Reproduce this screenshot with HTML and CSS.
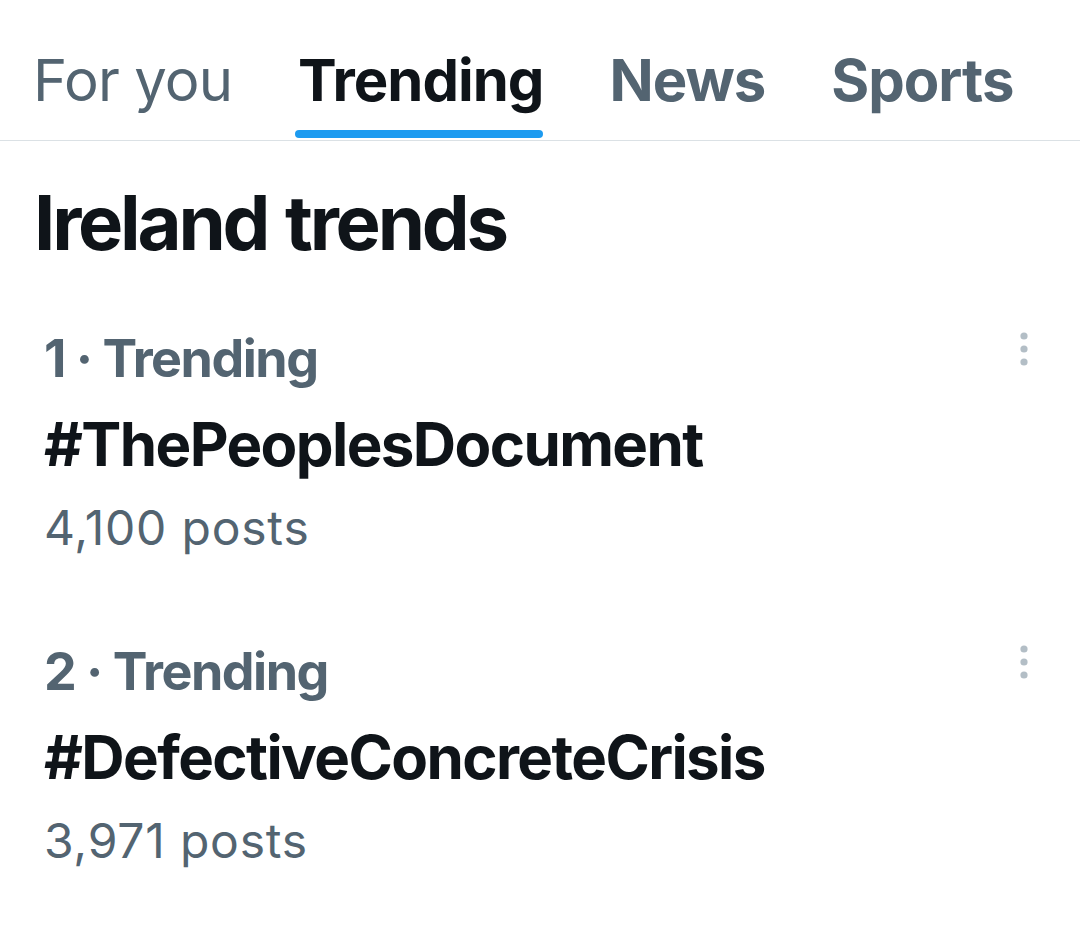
FILE: index.html
```html
<!DOCTYPE html>
<html lang="en">
<head>
<meta charset="utf-8">
<title>Trending</title>
<link rel="stylesheet" href="styles.css">
</head>
<body>
<div class="page">
  <nav class="tabs">
    <div class="tab tab-light"><span class="tab-label">For you</span></div>
    <div class="tab tab-active"><span class="tab-label">Trending</span><span class="tab-bar"></span></div>
    <div class="tab"><span class="tab-label">News</span></div>
    <div class="tab"><span class="tab-label">Sports</span></div>
  </nav>
  <h1 class="heading">Ireland trends</h1>
  <div class="trend">
    <div class="trend-main">
      <div class="trend-meta">1 · Trending</div>
      <div class="trend-name">#ThePeoplesDocument</div>
      <div class="trend-count">4,100 posts</div>
    </div>
    <svg class="trend-more" viewBox="0 0 14 34" width="14" height="34" aria-hidden="true">
      <circle cx="7" cy="4" r="3.6"/><circle cx="7" cy="17" r="3.6"/><circle cx="7" cy="30" r="3.6"/>
    </svg>
  </div>
  <div class="trend">
    <div class="trend-main">
      <div class="trend-meta">2 · Trending</div>
      <div class="trend-name">#DefectiveConcreteCrisis</div>
      <div class="trend-count">3,971 posts</div>
    </div>
    <svg class="trend-more" viewBox="0 0 14 34" width="14" height="34" aria-hidden="true">
      <circle cx="7" cy="4" r="3.6"/><circle cx="7" cy="17" r="3.6"/><circle cx="7" cy="30" r="3.6"/>
    </svg>
  </div>
</div>
</body>
</html>
```
FILE: styles.css
```css
* { box-sizing: border-box; }
html, body { margin: 0; padding: 0; background: #ffffff; }
body {
  font-family: Inter, "Noto Sans", "Liberation Sans", sans-serif;
  color: #0f1419;
  width: 1080px;
  height: 937px;
  overflow: hidden;
}
.tabs {
  display: flex;
  gap: 66px;
  padding: 45px 0 2px 33px;
  border-bottom: 1px solid #dbe1e5;
}
.tab {
  display: flex;
  flex-direction: column;
  align-items: stretch;
  font-size: 58px;
  line-height: 70px;
  font-weight: 700;
  color: #536471;
  letter-spacing: -1px;
}
.tab-label { display: block; height: 70px; white-space: nowrap; }
.tab-light { font-weight: 400; letter-spacing: -0.9px; }
.tab-active { color: #0f1419; }
.tab-bar {
  display: block;
  height: 8px;
  margin: 15px 0 0 -3px;
  background: #1d9bf0;
  border-radius: 4px;
}
.tab:not(.tab-active)::after {
  content: "";
  display: block;
  height: 8px;
  margin-top: 15px;
}
.heading {
  margin: 36px 0 19px 34px;
  font-size: 76px;
  line-height: 90px;
  font-weight: 700;
  letter-spacing: -3.2px;
  word-spacing: 3px;
}
.trend {
  display: flex;
  align-items: flex-start;
  justify-content: space-between;
  padding: 41px 49px 41px 44px;
}
.trend-main { display: flex; flex-direction: column; }
.trend-meta {
  font-size: 52px;
  line-height: 64px;
  font-weight: 700;
  color: #536471;
  letter-spacing: -1.5px;
}
.trend-name {
  margin-top: 15px;
  font-size: 60px;
  line-height: 76px;
  font-weight: 700;
  letter-spacing: -1.6px;
}
.trend-count {
  margin-top: 16px;
  font-size: 48px;
  line-height: 60px;
  font-weight: 400;
  color: #536471;
  letter-spacing: 0.8px;
}
.trend-more {
  margin-top: 5px;
  fill: #b3bec6;
  flex: none;
}
```
